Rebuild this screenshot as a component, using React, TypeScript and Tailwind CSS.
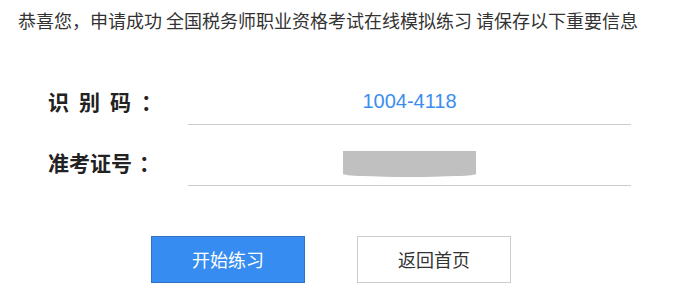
export default function App() {
  return (
    <div className="w-[673px] h-[294px] bg-white text-[#333] font-['Microsoft_YaHei','Noto_Sans_CJK_SC',sans-serif] overflow-hidden">
      {/* Header */}
      <p className="pl-[18px] pt-[8px] text-[18px] leading-[24px] whitespace-nowrap">
        恭喜您，申请成功 全国税务师职业资格考试在线模拟练习 请保存以下重要信息
      </p>

      {/* Info rows */}
      <div className="mt-[46px] pl-[48px]">
        <div className="flex">
          <div className="w-[140px] h-[47px] flex items-center">
            <div className="flex gap-[10px] text-[21px] font-bold text-[#222]">
              <span>识</span>
              <span>别</span>
              <span>码</span>
              <span>：</span>
            </div>
          </div>
          <div className="w-[443px] h-[47px] flex items-center justify-center border-b border-[#ccc] text-[20px] text-[#3a8ef0] font-['Liberation_Sans',Arial,sans-serif]">
            1004-4118
          </div>
        </div>
        <div className="flex mt-[14px]">
          <div className="w-[140px] h-[47px] flex items-center">
            <div className="flex text-[21px] font-bold text-[#222]">
              <span>准考证号</span>
              <span className="ml-[7px]">：</span>
            </div>
          </div>
          <div className="w-[443px] h-[47px] flex items-center justify-center border-b border-[#ccc]">
            <div className="w-[133px] h-[26px] mt-[4px] bg-[#c0c0c0] rounded-b-[50%_3px]" />
          </div>
        </div>
      </div>

      {/* Buttons */}
      <div className="mt-[50px] pl-[151px] flex gap-[52px]">
        <button className="w-[154px] h-[47px] bg-[#368cf0] border border-[#2f72c2] text-white text-[18px]">
          开始练习
        </button>
        <button className="w-[154px] h-[47px] bg-white border border-[#ccc] text-[#333] text-[18px]">
          返回首页
        </button>
      </div>
    </div>
  );
}
